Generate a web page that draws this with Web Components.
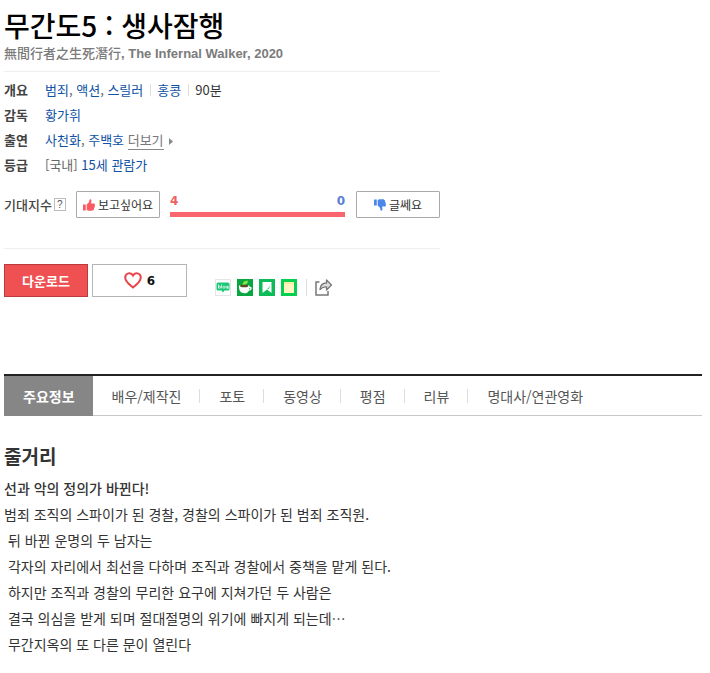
<!DOCTYPE html>
<html lang="ko">
<head>
<meta charset="utf-8">
<meta name="viewport" content="width=device-width, initial-scale=1">
<title>무간도5 : 생사잠행</title>
<style>
    body {
        margin: 0;
        padding: 5px 8px 12px 4px;
        background: #fff;
        color: #333;
        font-family: "Noto Sans CJK KR", "Noto Sans", sans-serif;
        font-size: 13px;
        line-height: 25px;
    }
</style>
</head>
<body>
<movie-summary>
    <movie-title slot="title" origin="無間行者之生死潛行" english=", The Infernal Walker, 2020">무간도5 : 생사잠행</movie-title>
    <movie-info slot="info"></movie-info>
    <expect-score slot="score" good="4" bad="0"></expect-score>
</movie-summary>
<movie-actions likes="6">
    <share-list></share-list>
</movie-actions>
<movie-tabs></movie-tabs>
<movie-story heading="줄거리"><strong slot="lead">선과 악의 정의가 바뀐다!</strong>범죄 조직의 스파이가 된 경찰, 경찰의 스파이가 된 범죄 조직원.
&nbsp;뒤 바뀐 운명의 두 남자는
&nbsp;각자의 자리에서 최선을 다하며 조직과 경찰에서 중책을 맡게 된다.
&nbsp;하지만 조직과 경찰의 무리한 요구에 지쳐가던 두 사람은
&nbsp;결국 의심을 받게 되며 절대절명의 위기에 빠지게 되는데…
&nbsp;무간지옥의 또 다른 문이 열린다</movie-story>

<script>
const define = (name, html, setup) => {
    const template = document.createElement("template")
    template.innerHTML = html
    customElements.define(name, class extends HTMLElement {
        constructor() {
            super()
            this.attachShadow({mode: "open"})
            this.shadowRoot.appendChild(template.content.cloneNode(true))
        }

        connectedCallback() {
            if (setup) {
                setup(this, (selector) => this.shadowRoot.querySelector(selector))
            }
        }
    })
}

// 영화 요약
define("movie-summary", `
<style>
    :host {
        display: block;
        max-width: 436px;
        border-bottom: 1px solid #eee;
        padding-bottom: 30px;
    }
</style>
<slot name="title"></slot>
<slot name="info"></slot>
<slot name="score"></slot>
`)

// 제목
define("movie-title", `
<style>
    :host {
        display: block;
        padding-bottom: 8px;
        border-bottom: 1px solid #eee;
    }
    h1 {
        margin: 0;
        color: #000;
        font-size: 28px;
        font-weight: 500;
        line-height: 40px;
    }
    p {
        margin: 0;
        color: #7b7b7b;
        font-family: "Liberation Sans", "Noto Sans CJK KR", sans-serif;
        font-size: 13px;
        font-weight: bold;
        line-height: 18px;
    }
    .origin {
        font-weight: 500;
    }
</style>
<h1><slot></slot></h1>
<p><span class="origin"></span><span class="english"></span></p>
`, (el, $) => {
    $(".origin").textContent = el.getAttribute("origin")
    $(".english").textContent = el.getAttribute("english")
})

// 기본 정보
define("movie-info", `
<style>
    :host {
        display: block;
        padding-top: 5px;
    }
    dl {
        display: grid;
        grid-template-columns: 41px 1fr;
        margin: 0;
    }
    dt {
        font-weight: bold;
        color: #444;
    }
    dd {
        margin: 0;
        color: #666;
    }
    a {
        color: #0f52a5;
        text-decoration: none;
    }
    .part {
        display: inline-block;
        line-height: 12px;
    }
    .part + .part {
        margin-left: 7px;
        padding-left: 6px;
        border-left: 1px solid #ddd;
    }
    .time {
        color: #333;
    }
    .more {
        color: #777;
        border-bottom: 1px solid #888;
    }
    svg {
        margin-left: 2px;
    }
</style>
<dl>
    <dt>개요</dt>
    <dd><span class="part"><a href="#">범죄</a>, <a href="#">액션</a>, <a href="#">스릴러</a></span><span class="part"><a href="#">홍콩</a></span><span class="part time">90분</span></dd>
    <dt>감독</dt>
    <dd><a href="#">황가휘</a></dd>
    <dt>출연</dt>
    <dd><a href="#">사천화</a>, <a href="#">주백호</a> <a class="more" href="#">더보기</a> <svg width="4" height="7" viewBox="0 0 4 7" aria-hidden="true"><path d="M0 0l4 3.500-4 3.500z" fill="#888"/></svg></dd>
    <dt>등급</dt>
    <dd>[국내] <a href="#">15세 관람가</a></dd>
</dl>
`)

// 투표 버튼
define("vote-button", `
<style>
    :host {
        display: block;
        flex: 0 0 84px;
    }
    button {
        display: flex;
        align-items: center;
        justify-content: center;
        gap: 3px;
        width: 100%;
        height: 27px;
        padding: 0;
        border: 1px solid #aaa;
        border-radius: 1px;
        background: #fff;
        color: #333;
        font: 12px/17px "Noto Sans CJK KR", sans-serif;
    }
    svg {
        fill: #fb5a61;
    }
    :host([down]) svg {
        fill: #4b87ea;
        transform: scaleY(-1);
    }
</style>
<button type="button">
    <svg width="12" height="12" viewBox="0 0 13 13" aria-hidden="true"><path d="M0 6h3v6.500H0zM4 6l2.500-2.500L7 1c.200-1 2-.800 2.200.600L8.800 5H12c.900.200 1.200 1 .700 1.700.400.600.300 1.300-.200 1.700.200.700 0 1.300-.500 1.700.200.700-.100 1.500-.700 1.900-.600.600-1.300.700-2.300.700H6L4 12z"/></svg>
    <span><slot></slot></span>
</button>
`)

// 기대지수
define("expect-score", `
<style>
    :host {
        display: flex;
        align-items: center;
        margin-top: 14px;
    }
    .label {
        display: flex;
        align-items: center;
        gap: 2px;
        flex: 0 0 72px;
        color: #444;
        font-weight: 500;
    }
    .help {
        width: 12px;
        height: 13px;
        padding: 0;
        border: 1px solid #bbb;
        background: #fff;
        color: #555;
        font: 10px/11px "Liberation Sans", sans-serif;
    }
    .graph {
        flex: 1;
        margin: 0 11px 0 10px;
    }
    .numbers {
        display: flex;
        justify-content: space-between;
        color: #ef5f65;
        font: bold 12px/16px "DejaVu Sans", sans-serif;
    }
    .bad {
        color: #5b7fd5;
    }
    .track {
        display: flex;
        height: 5px;
        margin-top: 3px;
        background: #5b7fd5;
    }
    .fill {
        background: #f9666e;
    }
</style>
<div class="label"><span>기대지수</span><button class="help" type="button" aria-label="기대지수 도움말">?</button></div>
<vote-button>보고싶어요</vote-button>
<div class="graph">
    <div class="numbers"><span class="good"></span><span class="bad"></span></div>
    <div class="track"><div class="fill"></div></div>
</div>
<vote-button down>글쎄요</vote-button>
`, (el, $) => {
    const good = Number(el.getAttribute("good"))
    const bad = Number(el.getAttribute("bad"))
    $(".good").textContent = good
    $(".bad").textContent = bad
    $(".fill").style.width = good / (good + bad) * 100 + "%"
})

// 다운로드, 좋아요
define("movie-actions", `
<style>
    :host {
        display: flex;
        align-items: center;
        gap: 4px;
        padding: 15px 0 77px;
    }
    button {
        display: flex;
        align-items: center;
        justify-content: center;
        gap: 5px;
        box-sizing: border-box;
        height: 33px;
        padding: 0;
        border: 1px solid #b5b5b5;
        background: #fff;
        color: #111;
        font: bold 12px/18px "DejaVu Sans", sans-serif;
    }
    .download {
        width: 84px;
        border-color: #b93b3d;
        background: #ef5152;
        color: #fff;
        font: bold 13px/18px "Noto Sans CJK KR", sans-serif;
    }
    .like {
        width: 95px;
    }
</style>
<button class="download" type="button">다운로드</button>
<button class="like" type="button" aria-label="좋아요">
    <svg width="18" height="17" viewBox="0 0 18 17" aria-hidden="true"><path d="M9 15.500C6 13 1.200 9.700 1.200 5.500c0-4.700 5.800-5.600 7.800-2 2-3.600 7.800-2.700 7.800 2C16.800 9.700 12 13 9 15.500z" fill="none" stroke="#e74549" stroke-width="2"/></svg>
    <span class="count"></span>
</button>
<slot></slot>
`, (el, $) => {
    $(".count").textContent = el.getAttribute("likes")
})

// 공유 아이콘
define("share-list", `
<style>
    :host {
        display: flex;
        align-items: center;
        gap: 6px;
        margin: 14px 0 0 24px;
    }
    a {
        display: block;
        line-height: 0;
    }
    .share {
        margin-left: 3px;
        padding-left: 8px;
        border-left: 1px solid #ddd;
    }
</style>
<a href="#" aria-label="블로그"><svg width="16" height="17" viewBox="0 0 16 17"><path d="M.5.500h15v16H.500z" fill="#fff" stroke="#e5e5e5"/><path d="M3 3.500h10q1.500 0 1.500 1.500v5q0 1.500-1.500 1.500H9.500L8 13.500 6.500 11.500H3Q1.500 11.500 1.500 10V5Q1.500 3.500 3 3.500z" fill="#1fc77a"/><g fill="none" stroke="#fff" stroke-width=".7"><path d="M3.500 5.500v4M6.500 5.500v4"/><circle cx="4.500" cy="8.200" r="1"/><circle cx="9" cy="8.200" r="1.100"/><circle cx="12" cy="8.200" r="1"/><path d="M13 7v3"/></g></svg></a>
<a href="#" aria-label="카페"><svg width="16" height="17" viewBox="0 0 16 17"><path fill="#07a640" d="M0 0h16v17H0z"/><path d="M5.500 5.500Q6 2 10.500 1.500q1.500 3-4 4.500z" fill="#8ee83c"/><path d="M2 6.500h10.500v1.200c3-.500 3 3.800-.700 4-1 3.200-7 3.500-8.800.300-1-1.500-1-3.500-1-5.500z" fill="#fff"/><ellipse cx="7.200" cy="7" rx="4.200" ry="1.300" fill="#5d4b25"/><path d="M12.500 8.800q1.500 0 .300 1.700h-.600z" fill="#07a640"/></svg></a>
<a href="#" aria-label="북마크"><svg width="16" height="17" viewBox="0 0 16 17"><path fill="#0dbb58" d="M0 0h16v17H0z"/><path d="M3.500 3h9v11L8 10.500 3.500 14z" fill="#fff"/><path d="M12 3.500Q11.500 8 5 13l3-2.500 2-1z" fill="#0dbb58"/></svg></a>
<a href="#" aria-label="메모"><svg width="16" height="17" viewBox="0 0 16 17"><path fill="#05cf4e" d="M0 0h16v17H0z"/><path d="M3 3h10v11H3z" fill="#fff4c2"/><path d="M3 3h10v2H3z" fill="#f4eca0"/></svg></a>
<a class="share" href="#" aria-label="공유"><svg width="18" height="17" viewBox="0 0 18 17"><path d="M4.500 3H1v13h12v-4" fill="none" stroke="#777" stroke-width="1.500"/><path d="M5 10.500Q5.500 4 11.500 4V1l5 5-5 5V8Q8 7.500 5 10.500z" fill="#ddd" stroke="#777" stroke-width="1.300" stroke-linejoin="round"/></svg></a>
`)

// 탭 메뉴
define("movie-tabs", `
<style>
    :host {
        display: block;
        border-top: 2px solid #222;
        border-bottom: 1px solid #c8c8c8;
    }
    nav {
        display: flex;
        height: 39px;
        align-items: center;
    }
    a {
        padding: 0 18px 0 19px;
        color: #555;
        font-size: 14px;
        line-height: 14px;
        text-decoration: none;
        white-space: nowrap;
    }
    a + a + a {
        border-left: 1px solid #ddd;
    }
    .on {
        align-self: stretch;
        margin-bottom: -1px;
        background: #868686;
        color: #fff;
        font-weight: bold;
        line-height: 40px;
    }
</style>
<nav>
    <a class="on" href="#" aria-current="page">주요정보</a>
    <a href="#">배우/제작진</a>
    <a href="#">포토</a>
    <a href="#">동영상</a>
    <a href="#">평점</a>
    <a href="#">리뷰</a>
    <a href="#">명대사/연관영화</a>
</nav>
`)

// 줄거리
define("movie-story", `
<style>
    :host {
        display: block;
        padding-top: 26px;
        font-size: 14px;
        line-height: 26px;
    }
    h2 {
        margin: 0 0 5px;
        font-size: 19px;
        font-weight: bold;
        line-height: 28px;
    }
    ::slotted(strong) {
        display: block;
        font-weight: 500;
    }
    p {
        margin: 0;
        white-space: pre-line;
    }
</style>
<h2></h2>
<slot name="lead"></slot>
<p><slot></slot></p>
`, (el, $) => {
    $("h2").textContent = el.getAttribute("heading")
})
</script>
</body>
</html>
